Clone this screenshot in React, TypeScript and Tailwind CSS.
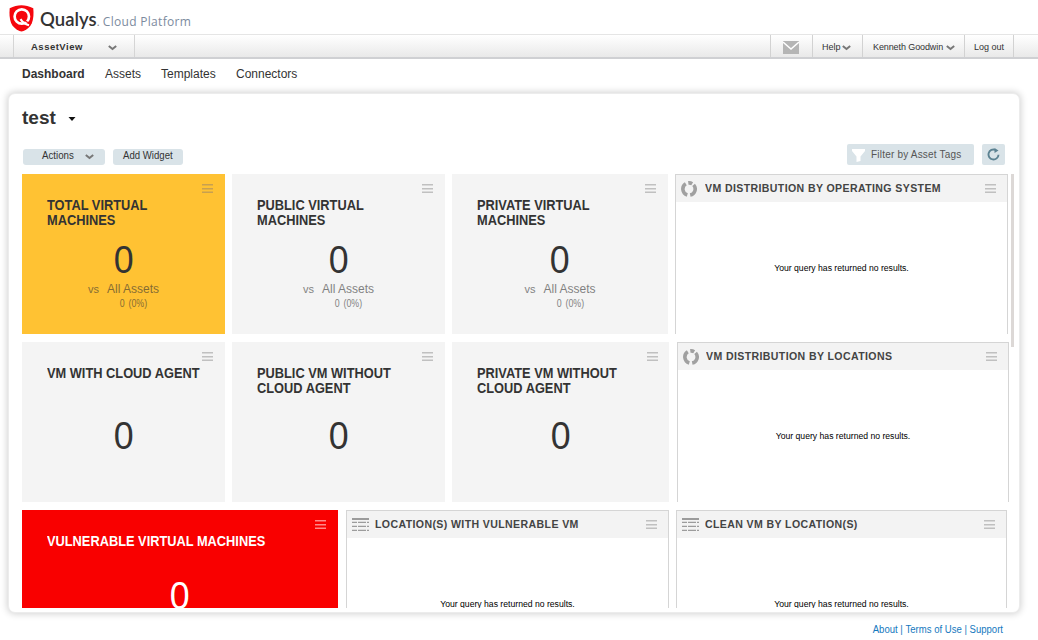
import React from "react";

function Chevron({ className = "" }: { className?: string }) {
  return (
    <svg className={`shrink-0 ${className}`} width="9" height="6" viewBox="0 0 9 6" fill="none">
      <path d="M.8 1l3.700 3L8.200 1" stroke="#777" strokeWidth="2" />
    </svg>
  );
}

function MenuIcon({ color = "#c0c0c0" }: { color?: string }) {
  return (
    <svg className="block shrink-0" width="11" height="10" viewBox="0 0 11 10" fill={color}>
      <path d="M0 0h11v1.500H0zM0 4h11v1.400H0zM0 7.600h11V9H0z" />
    </svg>
  );
}

function DonutIcon() {
  return (
    <svg className="block shrink-0" width="16" height="16" viewBox="0 0 16 16" fill="none" stroke="#a0a0a0" strokeWidth="3.600">
      <path d="M4.800 2.800A6.200 6.200 0 0 0 6.300 14" />
      <path d="M7.300 1.900A6.200 6.200 0 0 1 11.200 2.700" />
      <path d="M12.600 3.900A6.200 6.200 0 0 1 9.200 14.100" />
    </svg>
  );
}

function TableIcon() {
  return (
    <svg className="block shrink-0" width="17" height="13" viewBox="0 0 17 13" fill="#9c9c9c">
      <path d="M0 0h17v2H0z" />
      <path d="M0 3.700h5V5H0zM6 3.700h8V5H6zM15 3.700h2V5h-2zM0 7.700h5V9H0zM6 7.700h8V9H6zM15 7.700h2V9h-2zM0 11.700h5V13H0zM6 11.700h8V13H6zM15 11.700h2V13h-2z" />
    </svg>
  );
}

function ShieldLogo() {
  return (
    <svg className="shrink-0" width="25" height="27" viewBox="0 0 25 27" fill="none">
      <path d="M12.400.2C16 .4 20.500 1.300 24.300 3.200c.5 5.500.2 11-1.500 15-1.800 4-4.700 6.300-8.300 7.900q-2 .8-4 0C6.900 24.300 3.700 22 2.100 18 .4 13.500.2 8.500.7 3.200 4.500 1.200 8.600.4 12.400.2z" fill="#f6060d" />
      <circle cx="12.800" cy="11.500" r="7.200" stroke="#fff" strokeWidth="2.700" />
      <path d="M11.500 14.200c2 3.200 4.700 5 8.500 6.100" stroke="#fff" strokeWidth="2.200" />
      <path d="M15.500 15c1.200 1.400 2.500 2.300 4.500 3" stroke="#f6060d" strokeWidth="1.200" />
    </svg>
  );
}

type StatProps = {
  title: React.ReactNode;
  box: string;
  compare?: boolean;
  raised?: boolean;
  menu?: string;
  menuPlace?: string;
};

function Stat({ title, box, compare, raised, menu, menuPlace = "right-3" }: StatProps) {
  return (
    <section className={`relative h-[160px] shrink-0 ${box}`}>
      <div className={`absolute top-[10px] ${menuPlace}`}><MenuIcon color={menu} /></div>
      <h2 className="ml-[25px] h-[54px] origin-left scale-x-[0.915] pt-[24px] text-[14px] leading-[15px] font-bold whitespace-nowrap">{title}</h2>
      <div className={`text-center text-[38px] leading-[40px] ${compare || raised ? "mt-[12px]" : "mt-[20px]"}`}>
        <span className="inline-block scale-x-[0.94]">0</span>
      </div>
      {compare && (
        <div className="text-center opacity-60">
          <div className="mt-[2px] h-[14px] text-[12px] leading-[14px]">
            <span className="mr-[8px] text-[11px]">vs</span>All Assets
          </div>
          <div className="pt-px pl-[20px] text-[10px] leading-[13px] [word-spacing:1.500px]">
            <span className="inline-block scale-x-[0.88]">0 (0%)</span>
          </div>
        </div>
      )}
    </section>
  );
}

function Panel({ title, icon, box, gap }: { title: string; icon: React.ReactNode; box: string; gap: string }) {
  return (
    <section className={`flex h-[160px] shrink-0 flex-col border border-b-0 border-[#d5d5d5] ${box}`}>
      <header className="flex h-[27px] shrink-0 items-center bg-[#f3f3f3] pr-[11px] pl-[5px]">
        {icon}
        <h2 className={`flex-1 origin-left scale-x-[0.96] whitespace-nowrap text-[11px] font-bold tracking-[0.4px] text-[#444] ${gap}`}>{title}</h2>
        <MenuIcon />
      </header>
      <p className="scale-x-[0.9] pt-[59px] text-center text-[9.600px] leading-[14px] text-black">Your query has returned no results.</p>
    </section>
  );
}

export default function App() {
  return (
    <div className="flex h-[640px] w-[1038px] flex-col overflow-hidden bg-white font-['Liberation_Sans',Arial,sans-serif] text-[#333]">
      <header className="flex h-[34px] shrink-0 items-start pl-[9px] pt-[5px]">
        <ShieldLogo />
        <div className="ml-[6px] mt-[1px] flex items-baseline whitespace-nowrap">
          <span className="font-['Lato',sans-serif] text-[18.500px] leading-[26px] font-semibold text-[#333]">Qualys</span>
          <span className="text-[12px] text-[#888]">.</span>
          <span className="ml-[3px] font-['Open_Sans',sans-serif] text-[12px] tracking-[0.3px] text-[#7c8b9e]">Cloud Platform</span>
        </div>
      </header>

      <div className="flex h-[25px] shrink-0 border-t border-b-2 border-t-[#e5e5e5] border-b-[#cfd0d3] bg-linear-to-b from-white to-[#e9e9e9] text-[9px]">
        <div className="ml-[13px] flex h-[22px] w-[122px] items-center border-x border-[#d5d5d5] pt-[3px] pl-[17px] text-[9.500px] font-bold tracking-[0.5px]">
          AssetView
          <Chevron className="ml-[25px]" />
        </div>
        <div className="ml-auto mr-[24px] flex h-[22px] items-center whitespace-nowrap">
          <div className="flex h-full w-[43px] items-center border-x border-[#d2d2d2] pt-[2px] pl-[12px]">
            <svg width="16" height="13" viewBox="0 0 16 13"><path d="M0 0h16v13H0z" fill="#b5b5b5" /><path d="M0 1l8 7 8-7" fill="none" stroke="#fff" strokeWidth="1.500" /></svg>
          </div>
          <div className="flex h-full w-[50px] items-center border-r border-[#d2d2d2] pt-[4px] pl-[9px]">Help<Chevron className="ml-[1px]" /></div>
          <div className="flex h-full w-[102px] items-center border-r border-[#d2d2d2] pt-[4px] pl-[10px] tracking-[-0.1px]">Kenneth Goodwin<Chevron className="ml-[3px]" /></div>
          <div className="flex h-full w-[49px] items-center border-r border-[#d2d2d2] pt-[4px] pl-[9px]">Log out</div>
        </div>
      </div>

      <nav className="flex h-[34px] shrink-0 pl-[22px] pt-[7px] text-[12px] leading-[16px] whitespace-nowrap">
        <span className="w-[83px] font-bold">Dashboard</span>
        <span className="w-[56px]">Assets</span>
        <span className="w-[75px]">Templates</span>
        <span>Connectors</span>
      </nav>

      <main className="ml-[8px] flex h-[520px] w-[1012px] shrink-0 flex-col rounded-[7px] border border-[#ececec] bg-white pl-[13px] shadow-[0_0_7px_1px_rgba(0,0,0,0.18)]">
        <div className="flex h-[50px] shrink-0 items-center pb-[2px] text-[19px] font-bold">
          test
          <svg className="ml-[12px] mt-[2px]" width="8" height="4" viewBox="0 0 8 4"><path d="M.5 0h7L4 4z" fill="#111" /></svg>
        </div>
        <div className="flex h-[30px] shrink-0 text-[10px] whitespace-nowrap">
          <div className="mt-[5px] ml-px flex h-[16px] w-[82px] items-center rounded-[3px] bg-[#d9e3e8] pl-[19px] leading-[14px]"><span className="origin-left -translate-y-px scale-x-[0.97]">Actions</span><Chevron className="ml-[10px]" /></div>
          <div className="mt-[5px] ml-[8px] flex h-[16px] w-[70px] items-center justify-center rounded-[3px] bg-[#d9e3e8] leading-[14px]"><span className="-translate-y-px scale-x-[0.96]">Add Widget</span></div>
          <div className="ml-auto flex h-[21px] w-[127px] items-center rounded-[2px] bg-[#d9e3e8] pl-[5px] tracking-[0.2px] text-[#555]">
            <svg className="mt-[2px]" width="13" height="13" viewBox="0 0 13 13"><path d="M0 0h13v2L8.500 7.500V12L4.500 13V7.500L0 2z" fill="#fff" /></svg>
            <span className="ml-[6px]">Filter by Asset Tags</span>
          </div>
          <div className="ml-[8px] mr-[14px] flex h-[21px] w-[23px] items-center justify-center rounded-[2px] bg-[#d9e3e8]">
            <svg width="13" height="13" viewBox="0 0 13 13" fill="none"><path d="M8.500 1.900A5 5 0 1 0 11.500 6.700" stroke="#5c8292" strokeWidth="1.900" /><path d="M7.500 0l4 2.400-4 2.600z" fill="#5c8292" /></svg>
          </div>
        </div>

        <div className="flex h-[434px] shrink-0 overflow-hidden">
          <div className="flex w-[989px] shrink-0 flex-col gap-[8px]">
            <div className="flex shrink-0 gap-[7px]">
              <Stat box="w-[203px] bg-[#ffc233]" menu="#c8a050" compare title={<>TOTAL VIRTUAL<br />MACHINES</>} />
              <Stat box="w-[213px] bg-[#f4f4f4]" compare title={<>PUBLIC VIRTUAL<br />MACHINES</>} />
              <Stat box="w-[216px] bg-[#f4f4f4]" compare title={<>PRIVATE VIRTUAL<br />MACHINES</>} />
              <Panel box="w-[333px]" icon={<DonutIcon />} gap="ml-[8px]" title="VM DISTRIBUTION BY OPERATING SYSTEM" />
            </div>
            <div className="flex shrink-0 gap-[7px]">
              <Stat box="w-[203px] bg-[#f4f4f4]" title="VM WITH CLOUD AGENT" />
              <Stat box="w-[213px] bg-[#f4f4f4]" title={<>PUBLIC VM WITHOUT<br />CLOUD AGENT</>} />
              <Stat box="w-[217px] bg-[#f4f4f4]" menuPlace="right-[11px]" title={<>PRIVATE VM WITHOUT<br />CLOUD AGENT</>} />
              <Panel box="ml-px w-[332px]" icon={<DonutIcon />} gap="ml-[7px] -mr-px" title="VM DISTRIBUTION BY LOCATIONS" />
            </div>
            <div className="flex shrink-0 gap-[7px]">
              <Stat box="w-[316px] bg-[#f90000] text-white" raised menu="#ff8888" title="VULNERABLE VIRTUAL MACHINES" />
              <Panel box="ml-px w-[323px]" icon={<TableIcon />} gap="ml-[6px]" title="LOCATION(S) WITH VULNERABLE VM" />
              <Panel box="w-[331px]" icon={<TableIcon />} gap="ml-[6px]" title="CLEAN VM BY LOCATION(S)" />
            </div>
          </div>
          <div className="h-[173px] w-[3px] bg-[#dcd8d6]" />
        </div>
      </main>

      <footer className="mr-[35px] flex origin-right scale-x-[0.955] justify-end pt-[10px] text-[10px] leading-[14px] whitespace-pre text-[#1478be]">
        <span>About</span><span> | </span><span>Terms of Use</span><span> | </span><span>Support</span>
      </footer>
    </div>
  );
}
